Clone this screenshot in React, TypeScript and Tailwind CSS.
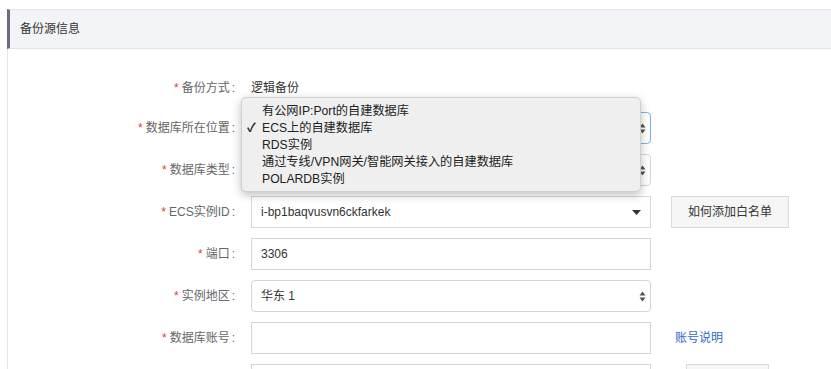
import React from 'react';

const font = { fontFamily: '"Liberation Sans", "Noto Sans CJK SC", sans-serif' };

function Label({ text }: { text: string }) {
  return (
    <div className="w-[230px] shrink-0 pr-[3px] text-right text-[12px] text-[#666]">
      <span className="mr-[3px] text-[#e4393c]">*</span>
      {text}
      <span className="ml-[2px]">:</span>
    </div>
  );
}

function UpDown() {
  return (
    <svg width="7" height="11" viewBox="0 0 7 11" className="text-[#555]">
      <path d="M3.5 0.5 L6.5 4.5 L0.5 4.5 Z" fill="currentColor" />
      <path d="M3.5 10.5 L6.5 6.5 L0.5 6.5 Z" fill="currentColor" />
    </svg>
  );
}

function Caret() {
  return (
    <svg width="9" height="5" viewBox="0 0 9 5" className="text-[#333]">
      <path d="M0 0 L9 0 L4.5 5 Z" fill="currentColor" />
    </svg>
  );
}

export default function App() {
  return (
    <div className="relative h-[369px] w-[831px] overflow-hidden bg-white pt-[9px]" style={font}>
      <div className="ml-[7px] h-full border-l border-[#e6e6e6]">
        {/* Section header */}
        <div className="-ml-px flex h-[40px] items-center border-y border-l-[3px] border-[#e4e5e9] border-l-[#6b6b7b] bg-[#f3f4f7] pl-[10px] text-[12px] text-[#333]">
          备份源信息
        </div>

        {/* Form */}
        <div className="flex flex-col pt-[24px]">
          <div className="flex h-[30px] items-center">
            <Label text="备份方式" />
            <div className="pl-[13px] text-[12px] text-[#333]">逻辑备份</div>
          </div>

          <div className="mt-[9px] flex flex-col gap-[10px]">
            {/* value hidden behind the open menu */}
            <div className="flex h-[32px] items-center">
              <Label text="数据库所在位置" />
              <div className="ml-[13px] flex h-[32px] w-[400px] items-center justify-end rounded-[4px] border border-[#7fb2ea] pr-[4px]">
                <UpDown />
              </div>
            </div>

            <div className="flex h-[32px] items-center">
              <Label text="数据库类型" />
              <div className="ml-[13px] flex h-[32px] w-[400px] items-center justify-end rounded-[4px] border border-[#d5d5d5] pr-[4px]">
                <UpDown />
              </div>
            </div>

            <div className="flex h-[32px] items-center">
              <Label text="ECS实例ID" />
              <div className="ml-[13px] flex h-[32px] w-[400px] items-center justify-between border border-[#d9d9d9] pl-[9px] pr-[9px] text-[12px] text-[#333]">
                <span>i-bp1baqvusvn6ckfarkek</span>
                <Caret />
              </div>
              <button className="ml-[20px] h-[32px] w-[118px] border border-[#dcdcdc] bg-[#f5f5f5] text-[12px] text-[#333]">
                如何添加白名单
              </button>
            </div>

            <div className="flex h-[32px] items-center">
              <Label text="端口" />
              <div className="ml-[13px] flex h-[32px] w-[400px] items-center border border-[#d5d5d5] pl-[9px] text-[12px] text-[#333]">
                3306
              </div>
            </div>

            <div className="flex h-[32px] items-center">
              <Label text="实例地区" />
              <div className="ml-[13px] flex h-[32px] w-[400px] items-center justify-between rounded-[4px] border border-[#d5d5d5] pl-[9px] pr-[4px] text-[12px] text-[#333]">
                <span>华东 1</span>
                <UpDown />
              </div>
            </div>

            <div className="flex h-[32px] items-center">
              <Label text="数据库账号" />
              <div className="ml-[13px] h-[32px] w-[400px] border border-[#d5d5d5]" />
              <a className="ml-[24px] text-[12px] text-[#2f6bc6]">账号说明</a>
            </div>

            {/* next row, only its top edge is in view */}
            <div className="flex h-[32px] items-center">
              <div className="w-[230px] shrink-0" />
              <div className="ml-[13px] h-[32px] w-[400px] border border-[#d5d5d5]" />
              <div className="ml-[35px] h-[32px] w-[83px] border border-[#dcdcdc] bg-[#f5f5f5]" />
            </div>
          </div>
        </div>
      </div>

      {/* Open select menu */}
      <div className="absolute left-[241px] top-[97px] w-[400px] rounded-[5px] border border-[#cfcfcf] bg-[#efefef] pb-[3px] pt-[5px] text-[12.2px] leading-[17px] text-[#222] shadow-[0_3px_10px_rgba(0,0,0,0.25)]">
        <div className="pl-[20px]">有公网IP:Port的自建数据库</div>
        <div className="relative pl-[20px]">
          <span className="absolute left-[5px] font-bold">✓</span>
          ECS上的自建数据库
        </div>
        <div className="pl-[20px]">RDS实例</div>
        <div className="pl-[20px]">通过专线/VPN网关/智能网关接入的自建数据库</div>
        <div className="pl-[20px]">POLARDB实例</div>
      </div>
    </div>
  );
}
